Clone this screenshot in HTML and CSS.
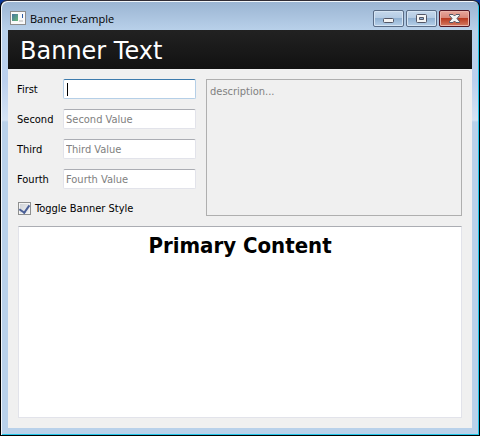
FILE: index.html
```html
<!DOCTYPE html>
<html lang="en">
<head>
<meta charset="utf-8">
<title>Banner Example</title>
<link rel="stylesheet" href="styles.css">
</head>
<body>
<div class="window">
  <header class="titlebar">
    <svg class="app-icon" width="16" height="14" viewBox="0 0 16 14" aria-hidden="true">
      <defs><linearGradient id="pane" x1="0" y1="0" x2="1" y2="1"><stop offset="0" stop-color="#4775a0"/><stop offset="1" stop-color="#67b879"/></linearGradient></defs>
      <rect x=".5" y=".5" width="15" height="13" fill="#fafafa" stroke="#8c8c8c"/>
      <rect x="2" y="3" width="6" height="7" fill="url(#pane)"/>
      <rect x="9" y="9" width="3" height="2" fill="#d8d8d8"/>
      <rect x="12" y="3" width="1" height="4" fill="#2f5fa5"/>
      <rect x="12" y="9" width="1" height="2" fill="#d8d8d8"/>
    </svg>
    <span class="title">Banner Example</span>
    <button class="control" type="button" aria-label="Minimize">
      <svg width="13" height="11" viewBox="0 0 13 11"><rect x="1.500" y="5.500" width="10" height="4" rx="1" fill="#f4f4f4" stroke="#535666"/></svg>
    </button>
    <button class="control" type="button" aria-label="Maximize">
      <svg width="13" height="11" viewBox="0 0 13 11"><rect x="1.500" y="1.500" width="10" height="8" rx="1" fill="#f4f4f4" stroke="#535666"/><path d="M4.500 4.500h4v2h-4z" fill="#91b1d2" stroke="#535666"/></svg>
    </button>
    <button class="control close" type="button" aria-label="Close">
      <svg width="13" height="11" viewBox="0 0 13 11"><path d="M1.500 1.500h3.500l1.500 1.500 1.500-1.500h3.500v1l-2.500 3 2.500 3v1h-3.500l-1.500-1.500-1.500 1.500h-3.500v-1l2.500-3-2.500-3z" fill="#f4f4f4" stroke="#535666"/></svg>
    </button>
  </header>
  <main class="client">
    <h1 class="banner">Banner Text</h1>
    <form class="content">
      <div class="columns">
        <div class="fields">
          <label for="first">First</label><input class="field focused" id="first" type="text">
          <label for="second">Second</label><input class="field" id="second" type="text" placeholder="Second Value">
          <label for="third">Third</label><input class="field" id="third" type="text" placeholder="Third Value">
          <label for="fourth">Fourth</label><input class="field" id="fourth" type="text" placeholder="Fourth Value">
          <label class="toggle"><input class="check" type="checkbox" checked>Toggle Banner Style</label>
        </div>
        <textarea class="description" aria-label="Description" placeholder="description..."></textarea>
      </div>
      <section class="primary"><h2>Primary Content</h2></section>
    </form>
  </main>
</div>
</body>
</html>
```
FILE: styles.css
```css
* { box-sizing: border-box; }

body {
  margin: 0;
  background: linear-gradient(#0a3aa0, #000 30px);
  font-family: "DejaVu Sans Condensed", "DejaVu Sans", sans-serif;
  font-size: 11px;
  color: #000;
}

.window {
  display: flex;
  flex-direction: column;
  min-height: 100vh;
  padding: 0 7px 7px;
  border: 1px solid #000;
  border-top-color: #302c35;
  border-radius: 7px 7px 0 0;
  background: linear-gradient(#9ab4d2, #b9d1ea 30px, #bbd0ee 80px, #d5e3f4 119px, #b9d1ea 121px, #b9d1ea);
  box-shadow: inset 1px 1px #f2f6fa, inset -1px -1px #20c5e8;
}

.titlebar {
  display: flex;
  align-items: flex-start;
  gap: 2px;
  height: 28px;
  padding: 9px 2px 0;
}

.app-icon { margin-top: 1px; }

.title {
  flex: 1;
  margin-left: 2px;
  font: 11px/18px "Open Sans", sans-serif;
}

.control {
  display: grid;
  place-items: center;
  width: 31px;
  height: 17px;
  padding: 0;
  border: 1px solid #596b85;
  border-radius: 2px;
  background: linear-gradient(#c5d8ec, #b3cae3 49%, #91b1d2 50%, #b7d0e9);
  box-shadow: inset 0 0 0 1px #d5e4f3;
}

.close {
  border-color: #531724;
  background: linear-gradient(#e8a79c, #d78475 49%, #b93a20 50%, #d47b62);
  box-shadow: inset 0 0 0 1px #eab4a9;
}

.client {
  display: flex;
  flex: 1;
  flex-direction: column;
  margin-top: 1px;
  background: #f0f0f0;
}

.banner {
  margin: 0;
  padding: 3px 12px 0;
  background: linear-gradient(#222, #111);
  color: #fff;
  font: 24px/36px "DejaVu Sans", sans-serif;
}

.content {
  display: flex;
  flex: 1;
  flex-direction: column;
  gap: 10px;
  padding: 10px;
}

.columns {
  display: grid;
  grid-template-columns: 178px 1fr;
  gap: 10px;
}

.fields {
  display: grid;
  grid-template-columns: 45px 1fr;
  row-gap: 10px;
  align-content: start;
  align-items: center;
  line-height: 20px;
}

.fields > label { margin-left: -1px; padding-top: 1px; line-height: 19px; }

.field, .description {
  width: 100%;
  margin: 0;
  padding: 2px 2px 0;
  border: 1px solid #e2e3ea;
  border-top-color: #abadb3;
  border-radius: 2px;
  outline: 0;
  background: #fff;
  font: inherit;
  color: #000;
}

.field { height: 20px; }

.focused {
  border-color: #b5cfe7;
  border-top-color: #3d7bad;
  background: linear-gradient(#000, #000) 3px center / 1px 13px no-repeat #fff;
}

::placeholder { color: #808080; opacity: 1; }

.description {
  height: 137px;
  padding: 5px 3px;
  border-color: #afafaf;
  border-radius: 0;
  background: #f0f0f0;
  resize: none;
}

.fields > .toggle {
  display: flex;
  grid-column: 1 / -1;
  align-items: center;
  gap: 4px;
  height: 17px;
  margin-left: 0;
}

.check {
  display: grid;
  place-items: center;
  width: 13px;
  height: 13px;
  margin: 0;
  appearance: none;
  border: 1px solid #8e8f8f;
  background: linear-gradient(135deg, #cbcfd5, #f6f6f6);
  box-shadow: inset 0 0 0 1px #f4f4f4;
}

.check:checked::before {
  content: "";
  width: 5px;
  height: 8px;
  margin-bottom: 2px;
  border: solid #4a5f97;
  border-width: 0 2px 2px 0;
  transform: rotate(35deg);
}

.primary {
  flex: 1;
  border: 1px solid #e2e3ea;
  border-top-color: #abadb3;
  background: #fff;
}

.primary h2 {
  margin: 5px 0;
  font-size: 22px;
  line-height: 27px;
  text-align: center;
}
```
